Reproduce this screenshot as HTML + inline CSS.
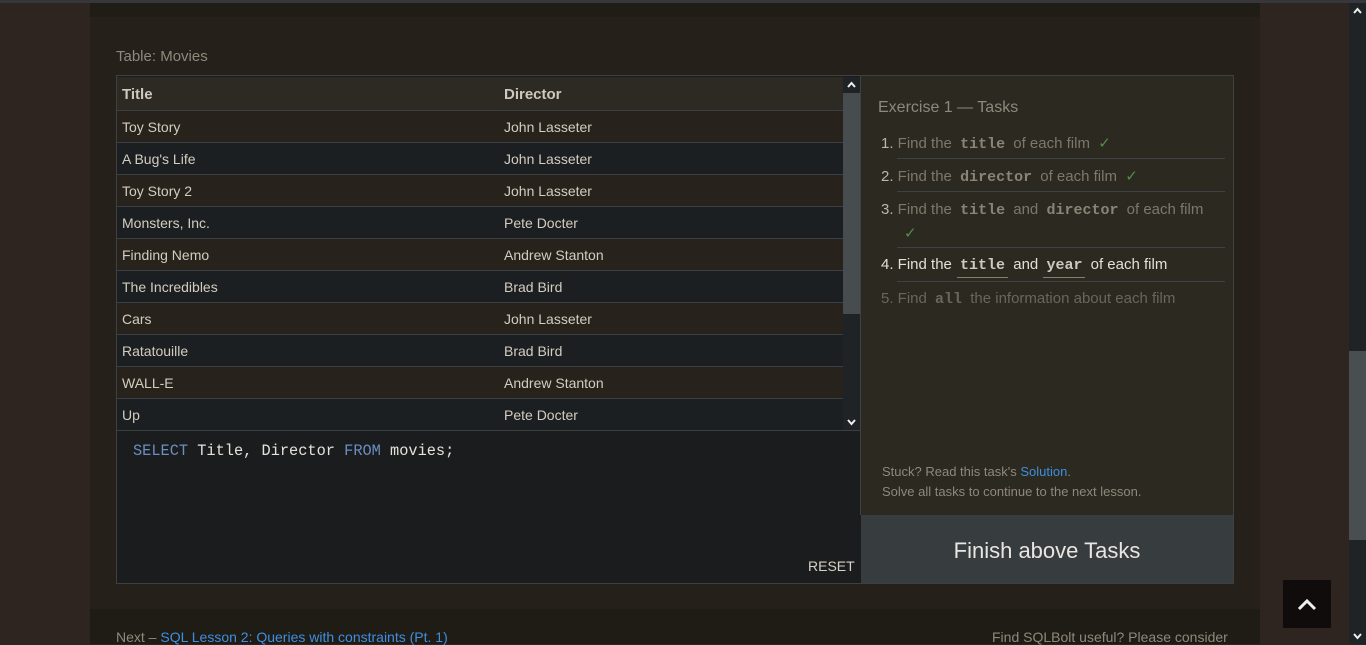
<!DOCTYPE html>
<html><head><meta charset="utf-8"><style>
*{margin:0;padding:0;box-sizing:border-box}
body{width:1366px;height:644px;overflow:hidden;background:#2e2521;font-family:"Liberation Sans",sans-serif;position:relative;color:#c8c0b4}
.a{position:absolute}
.row{position:absolute;left:0;width:727px;height:32px;border-top:1px solid #3b3f42;font-size:14px;color:#d4ccc0}
.row span{position:absolute;top:8px}
.t{left:5px}.d{left:387px}
code{font-family:"Liberation Mono",monospace;font-weight:bold;font-size:15px;padding:0 4px}
.li{position:absolute;left:20px;font-size:15px;color:#7e786c;white-space:nowrap}
.n{color:#bdb6aa}
.ck{color:#4f8f4a}
.sep{position:absolute;left:36px;width:328px;height:1px;background:#3f4244}
</style></head><body>
<div class="a" style="left:0;top:0;width:1366px;height:3px;background:#37363c"></div>
<div class="a" style="left:90px;top:3px;width:1170px;height:14px;background:#201d17"></div>
<div class="a" style="left:90px;top:17px;width:1170px;height:592px;background:#252019"></div>
<div class="a" style="left:90px;top:609px;width:1170px;height:35px;background:#1f1c16"></div>
<div class="a" style="left:1349px;top:3px;width:17px;height:641px;background:#202325"></div>
<div class="a" style="left:1349px;top:351px;width:17px;height:189px;background:#494e51"></div>
<svg class="a" style="left:1352px;top:6px" width="11" height="10"><path d="M2 7 L5.5 3 L9 7" stroke="#eee" stroke-width="2" fill="none"/></svg>
<div class="a" style="left:116px;top:48px;font-size:15px;color:#8f887c">Table: Movies</div>

<div class="a" style="left:116px;top:75px;width:1118px;height:509px;border:1px solid #3d4144;background:#1b1c1e"></div>
<div class="a" style="left:117px;top:77px;width:727px;height:353px;overflow:hidden">
<div class="row" style="top:0;height:33px;background:#2c2a22;border-top:none"><span class="t" style="top:9px;font-weight:bold;font-size:15px;color:#cfc8bc">Title</span><span class="d" style="top:9px;font-weight:bold;font-size:15px;color:#cfc8bc">Director</span></div>
<div class="row" style="top:33px;background:#27221b"><span class="t">Toy Story</span><span class="d">John Lasseter</span></div>
<div class="row" style="top:65px;background:#1c1f21"><span class="t">A Bug's Life</span><span class="d">John Lasseter</span></div>
<div class="row" style="top:97px;background:#27221b"><span class="t">Toy Story 2</span><span class="d">John Lasseter</span></div>
<div class="row" style="top:129px;background:#1c1f21"><span class="t">Monsters, Inc.</span><span class="d">Pete Docter</span></div>
<div class="row" style="top:161px;background:#27221b"><span class="t">Finding Nemo</span><span class="d">Andrew Stanton</span></div>
<div class="row" style="top:193px;background:#1c1f21"><span class="t">The Incredibles</span><span class="d">Brad Bird</span></div>
<div class="row" style="top:225px;background:#27221b"><span class="t">Cars</span><span class="d">John Lasseter</span></div>
<div class="row" style="top:257px;background:#1c1f21"><span class="t">Ratatouille</span><span class="d">Brad Bird</span></div>
<div class="row" style="top:289px;background:#27221b"><span class="t">WALL-E</span><span class="d">Andrew Stanton</span></div>
<div class="row" style="top:321px;background:#1c1f21;height:32px"><span class="t">Up</span><span class="d">Pete Docter</span></div>
</div>
<div class="a" style="left:843px;top:77px;width:17px;height:353px;background:#1f2325"></div>
<div class="a" style="left:843px;top:93px;width:17px;height:221px;background:#474c4f"></div>
<svg class="a" style="left:846px;top:80px" width="11" height="10"><path d="M2 7 L5.5 3 L9 7" stroke="#eee" stroke-width="2" fill="none"/></svg>
<svg class="a" style="left:846px;top:417px" width="11" height="10"><path d="M2 3 L5.5 7 L9 3" stroke="#eee" stroke-width="2" fill="none"/></svg>
<div class="a" style="left:117px;top:430px;width:743px;height:1px;background:#3b3f42"></div>
<div class="a" style="left:133px;top:442px;font-family:'Liberation Mono',monospace;font-size:15.3px;color:#e6e2da;white-space:pre"><span style="color:#6a8fc0">SELECT</span> Title, Director <span style="color:#6a8fc0">FROM</span> movies;</div>
<div class="a" style="left:808px;top:558px;font-size:14px;color:#d8d2c6">RESET</div>

<div class="a" style="left:860px;top:76px;width:373px;height:439px;background:#2b2920;border-left:1px solid #3d4144">
<div class="a" style="left:17px;top:23px;font-size:16px;color:#8f887c">Exercise 1 — Tasks</div>
<div class="li" style="top:58px"><span class="n">1.</span> Find the <code style="color:#8a8478">title</code> of each film &nbsp;<span class="ck">✓</span></div>
<div class="sep" style="top:82px"></div>
<div class="li" style="top:91px"><span class="n">2.</span> Find the <code style="color:#8a8478">director</code> of each film &nbsp;<span class="ck">✓</span></div>
<div class="sep" style="top:115px"></div>
<div class="li" style="top:125px"><span class="n">3.</span> Find the <code style="color:#8a8478">title</code> and <code style="color:#8a8478">director</code> of each film</div>
<div class="li ck" style="top:148px;left:43px">✓</div>
<div class="sep" style="top:171px"></div>
<div class="li" style="top:180px;color:#e6e0d4">4. Find the <code style="color:#cfc8bc;border-bottom:1px solid #8a7e6c;padding:0 3px 3px;margin:0 1px">title</code> and <code style="color:#cfc8bc;border-bottom:1px solid #8a7e6c;padding:0 3px 3px;margin:0 1px">year</code> of each film</div>
<div class="sep" style="top:205px"></div>
<div class="li" style="top:214px;color:#6b665c">5. Find <code style="color:#6b665c">all</code> the information about each film</div>
<div class="a" style="left:21px;top:388px;font-size:13px;color:#8f887c">Stuck? Read this task's <span style="color:#3f8ee0">Solution</span>.</div>
<div class="a" style="left:21px;top:408px;font-size:13px;color:#8f887c">Solve all tasks to continue to the next lesson.</div>
</div>
<div class="a" style="left:861px;top:515px;width:372px;height:68px;background:#373c3f;color:#e8e6e2;font-size:22px;text-align:center;line-height:72px">Finish above Tasks</div>

<div class="a" style="left:116px;top:629px;font-size:14px;color:#8f887c">Next – <span style="color:#3f8ee0">SQL Lesson 2: Queries with constraints (Pt. 1)</span></div>
<div class="a" style="left:992px;top:629px;font-size:14px;color:#8f887c">Find SQLBolt useful? Please consider</div>
<div class="a" style="left:1283px;top:580px;width:48px;height:48px;background:#0f0c0b"></div>
<svg class="a" style="left:1296px;top:594px" width="22" height="20"><path d="M3 15 L11 7 L19 15" stroke="#eee" stroke-width="3" fill="none"/></svg>
<svg class="a" style="left:1352px;top:631px" width="11" height="10"><path d="M2 3 L5.5 7 L9 3" stroke="#eee" stroke-width="2" fill="none"/></svg>
</body></html>
